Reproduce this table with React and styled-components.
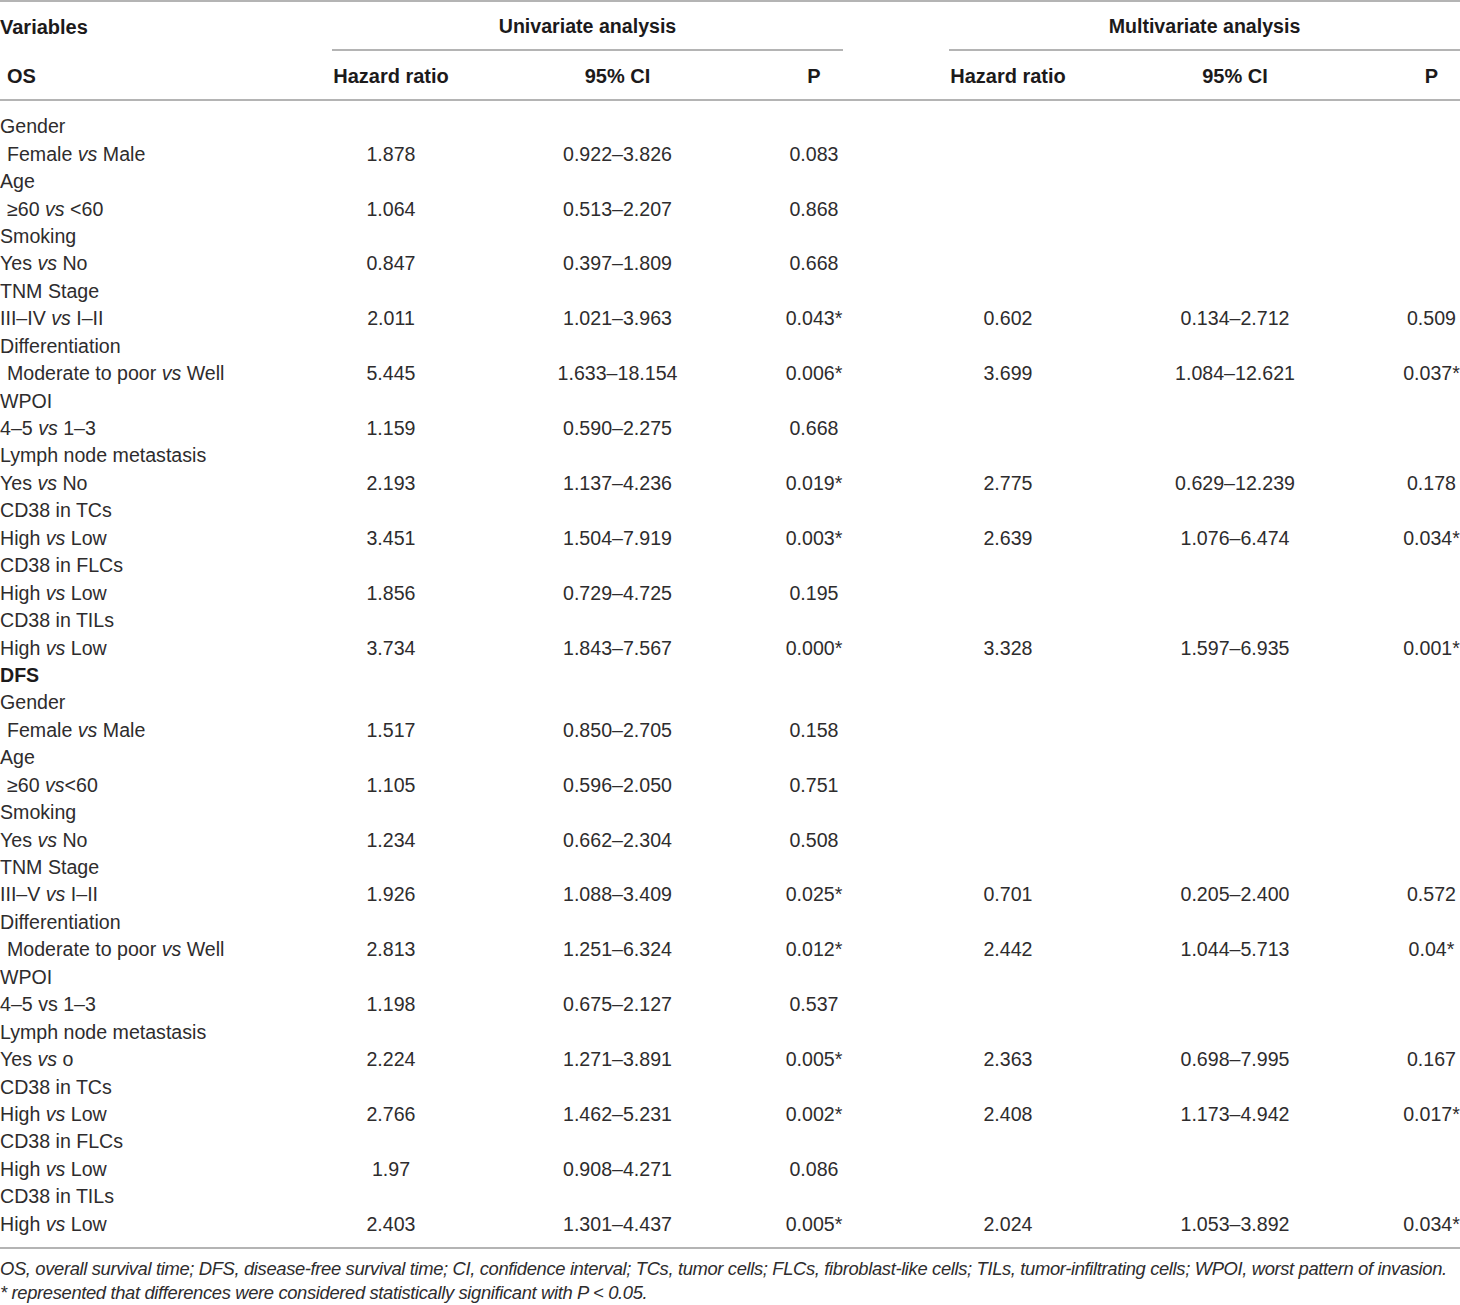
import React from "react";
import styled, { createGlobalStyle } from "styled-components";

const COLS = "332px 118px 335px 58px 106px 118px 336px 57px";
const RULE = "2px solid #b4b4b4";

const GlobalStyle = createGlobalStyle`
  html, body {
    margin: 0;
    padding: 0;
    background: #fff;
  }
  body {
    font-family: "Liberation Sans", Arial, sans-serif;
    color: #2e2c2d;
  }
`;

const Page = styled.div`
  width: 1460px;
  font-size: 19.6px;
`;

const HeaderTop = styled.div`
  display: grid;
  grid-template-columns: ${COLS};
  height: 49px;
  border-top: ${RULE};
  font-weight: bold;
  color: #1c1a1b;
`;

const HeaderSub = styled.div`
  display: grid;
  grid-template-columns: ${COLS};
  height: 50px;
  border-bottom: ${RULE};
  box-sizing: border-box;
  font-weight: bold;
  color: #1c1a1b;
`;

const HeadCell = styled.div`
  display: flex;
  align-items: center;
  justify-content: ${(p) => (p.left ? "flex-start" : "center")};
  padding-left: ${(p) => (p.indent ? "7px" : "0")};
  padding-top: 2px;
  font-size: 20px;
  white-space: nowrap;
`;

const GroupCell = styled.div`
  grid-column: ${(p) => p.span};
  display: flex;
  align-items: center;
  justify-content: center;
  padding-top: 2px;
  border-bottom: ${RULE};
  white-space: nowrap;
`;

const Body = styled.div`
  padding: 12.2px 0 8.6px;
  border-bottom: ${RULE};
`;

const Row = styled.div`
  display: grid;
  grid-template-columns: ${COLS};
  height: 27.45px;
  align-items: center;
  line-height: 27.45px;
`;

const Label = styled.div`
  padding-left: ${(p) => (p.indent ? "7px" : "0")};
  font-weight: ${(p) => (p.bold ? "bold" : "normal")};
  color: ${(p) => (p.bold ? "#1c1a1b" : "inherit")};
  white-space: nowrap;
`;

const Value = styled.div`
  text-align: center;
  white-space: nowrap;
`;

const Notes = styled.div`
  padding-top: 8px;
  font-style: italic;
  font-size: 18.4px;
  letter-spacing: -0.36px;
  line-height: 24px;
  white-space: nowrap;
`;

const vs = (a, b, sep = " ") => (
  <>
    {a} <i>vs</i>
    {sep}
    {b}
  </>
);

const OS = [
  { label: "Gender" },
  { label: vs("Female", "Male"), indent: true, v: ["1.878", "0.922–3.826", "0.083"] },
  { label: "Age" },
  { label: vs("≥60", "<60"), indent: true, v: ["1.064", "0.513–2.207", "0.868"] },
  { label: "Smoking" },
  { label: vs("Yes", "No"), v: ["0.847", "0.397–1.809", "0.668"] },
  { label: "TNM Stage" },
  { label: vs("III–IV", "I–II"), v: ["2.011", "1.021–3.963", "0.043*", "", "0.602", "0.134–2.712", "0.509"] },
  { label: "Differentiation" },
  { label: vs("Moderate to poor", "Well"), indent: true, v: ["5.445", "1.633–18.154", "0.006*", "", "3.699", "1.084–12.621", "0.037*"] },
  { label: "WPOI" },
  { label: vs("4–5", "1–3"), v: ["1.159", "0.590–2.275", "0.668"] },
  { label: "Lymph node metastasis" },
  { label: vs("Yes", "No"), v: ["2.193", "1.137–4.236", "0.019*", "", "2.775", "0.629–12.239", "0.178"] },
  { label: "CD38 in TCs" },
  { label: vs("High", "Low"), v: ["3.451", "1.504–7.919", "0.003*", "", "2.639", "1.076–6.474", "0.034*"] },
  { label: "CD38 in FLCs" },
  { label: vs("High", "Low"), v: ["1.856", "0.729–4.725", "0.195"] },
  { label: "CD38 in TILs" },
  { label: vs("High", "Low"), v: ["3.734", "1.843–7.567", "0.000*", "", "3.328", "1.597–6.935", "0.001*"] },
];

const DFS = [
  { label: "DFS", bold: true },
  { label: "Gender" },
  { label: vs("Female", "Male"), indent: true, v: ["1.517", "0.850–2.705", "0.158"] },
  { label: "Age" },
  { label: vs("≥60", "<60", ""), indent: true, v: ["1.105", "0.596–2.050", "0.751"] },
  { label: "Smoking" },
  { label: vs("Yes", "No"), v: ["1.234", "0.662–2.304", "0.508"] },
  { label: "TNM Stage" },
  { label: vs("III–V", "I–II"), v: ["1.926", "1.088–3.409", "0.025*", "", "0.701", "0.205–2.400", "0.572"] },
  { label: "Differentiation" },
  { label: vs("Moderate to poor", "Well"), indent: true, v: ["2.813", "1.251–6.324", "0.012*", "", "2.442", "1.044–5.713", "0.04*"] },
  { label: "WPOI" },
  { label: "4–5 vs 1–3", v: ["1.198", "0.675–2.127", "0.537"] },
  { label: "Lymph node metastasis" },
  { label: vs("Yes", "o"), v: ["2.224", "1.271–3.891", "0.005*", "", "2.363", "0.698–7.995", "0.167"] },
  { label: "CD38 in TCs" },
  { label: vs("High", "Low"), v: ["2.766", "1.462–5.231", "0.002*", "", "2.408", "1.173–4.942", "0.017*"] },
  { label: "CD38 in FLCs" },
  { label: vs("High", "Low"), v: ["1.97", "0.908–4.271", "0.086"] },
  { label: "CD38 in TILs" },
  { label: vs("High", "Low"), v: ["2.403", "1.301–4.437", "0.005*", "", "2.024", "1.053–3.892", "0.034*"] },
];

function TableRow({ row }) {
  const values = row.v || [];
  // always render 7 value cells so the grid lines up
  const cells = Array.from({ length: 7 }, (_, i) => values[i] || "");
  return (
    <Row>
      <Label indent={row.indent} bold={row.bold}>
        {row.label}
      </Label>
      {cells.map((val, i) => (
        <Value key={i}>{val}</Value>
      ))}
    </Row>
  );
}

export default function App() {
  const rows = [...OS, ...DFS];
  return (
    <Page>
      <GlobalStyle />
      <HeaderTop>
        <HeadCell left>Variables</HeadCell>
        <GroupCell span="2 / 5">Univariate analysis</GroupCell>
        <div />
        <GroupCell span="6 / 9">Multivariate analysis</GroupCell>
      </HeaderTop>
      <HeaderSub>
        <HeadCell left indent>
          OS
        </HeadCell>
        <HeadCell>Hazard ratio</HeadCell>
        <HeadCell>95% CI</HeadCell>
        <HeadCell>P</HeadCell>
        <div />
        <HeadCell>Hazard ratio</HeadCell>
        <HeadCell>95% CI</HeadCell>
        <HeadCell>P</HeadCell>
      </HeaderSub>
      <Body>
        {rows.map((row, i) => (
          <TableRow key={i} row={row} />
        ))}
      </Body>
      <Notes>
        <div>
          OS, overall survival time; DFS, disease-free survival time; CI, confidence interval; TCs, tumor cells; FLCs,
          fibroblast-like cells; TILs, tumor-infiltrating cells; WPOI, worst pattern of invasion.
        </div>
        <div>* represented that differences were considered statistically significant with P &lt; 0.05.</div>
      </Notes>
    </Page>
  );
}
